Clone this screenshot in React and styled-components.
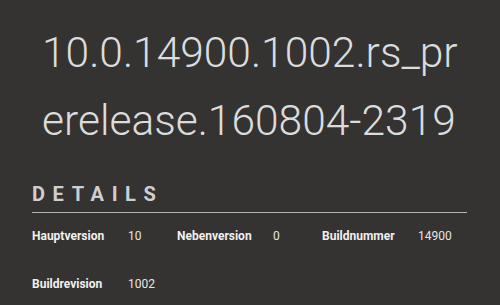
import React from 'react';
import styled, { createGlobalStyle } from 'styled-components';

const GlobalStyle = createGlobalStyle`
  html, body {
    margin: 0;
    padding: 0;
    background: #343332;
  }
  body {
    font-family: Roboto, "Liberation Sans", sans-serif;
  }
`;

const Page = styled.div`
  width: 500px;
  height: 305px;
  box-sizing: border-box;
  padding: 19px 33px 0 32px;
  background: #343332;
  overflow: hidden;
`;

const Version = styled.h1`
  width: 424px;
  margin: 0 0 0 10px;
  font-size: 42.5px;
  font-weight: 300;
  line-height: 68px;
  color: #dcdcdc;
  word-break: break-all;
`;

const Heading = styled.h2`
  margin: 27px 0 0;
  padding-bottom: 6px;
  font-size: 20px;
  font-weight: 700;
  letter-spacing: 7.6px;
  line-height: 24px;
  color: #cfcfcf;
  border-bottom: 1px solid #b5b5b5;
`;

const Grid = styled.div`
  display: grid;
  grid-template-columns: repeat(3, 96px 49px);
  grid-auto-rows: 48px;
  padding-top: 16px;
  font-size: 12px;
  line-height: 14px;
`;

const Label = styled.div`
  font-weight: 700;
  color: #f0f0f0;
`;

const Value = styled.div`
  color: #e6e6e6;
`;

const details = [
  ['Hauptversion', '10'],
  ['Nebenversion', '0'],
  ['Buildnummer', '14900'],
  ['Buildrevision', '1002'],
];

export default function App() {
  return (
    <>
      <GlobalStyle />
      <Page>
        <Version>10.0.14900.1002.rs_prerelease.160804-2319</Version>
        <Heading>DETAILS</Heading>
        <Grid>
          {details.map(([label, value]) => (
            <React.Fragment key={label}>
              <Label>{label}</Label>
              <Value>{value}</Value>
            </React.Fragment>
          ))}
        </Grid>
      </Page>
    </>
  );
}
